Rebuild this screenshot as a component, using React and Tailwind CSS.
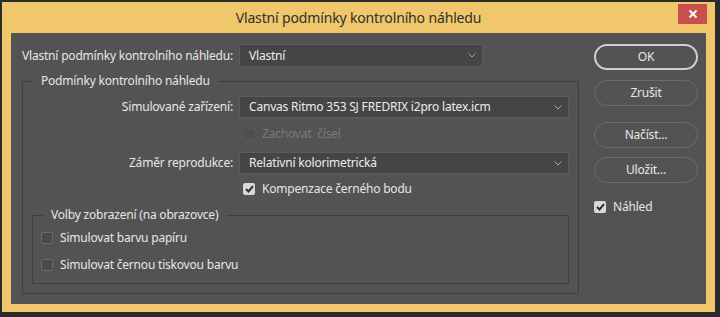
import React from 'react'

function Chevron() {
  return (
    <svg width="8" height="5" viewBox="0 0 8 5" className="shrink-0">
      <path d="M0.5 0.5 L4 4 L7.5 0.5" fill="none" stroke="#a8a8a8" strokeWidth="1" />
    </svg>
  )
}

function Select({ value, width }) {
  return (
    <div
      className={`flex items-center justify-between h-full ${width} bg-[#454545] border border-[#5c5c5c] rounded-[2px] pl-[9px] pr-[6px]`}
    >
      <span className="text-[#ececec] whitespace-nowrap">{value}</span>
      <Chevron />
    </div>
  )
}

function Check({ checked, disabled, label }) {
  return (
    <div className="flex items-center h-[16px] gap-[7px]">
      {checked ? (
        <span className="w-[12px] h-[12px] rounded-[2px] bg-[#d8d8d8] flex items-center justify-center">
          <svg width="9" height="8" viewBox="0 0 9 8">
            <path d="M1 4 L3.5 6.5 L8 1.2" fill="none" stroke="#2e2e2e" strokeWidth="2" />
          </svg>
        </span>
      ) : (
        <span
          className={`w-[12px] h-[12px] rounded-[2px] border ${
            disabled ? 'border-[#585858] bg-[#4e4e4e]' : 'border-[#6a6a6a] bg-[#4a4a4a]'
          }`}
        />
      )}
      <span className={`whitespace-pre ${disabled ? 'text-[#7a7a7a]' : 'text-[#e6e6e6]'}`}>{label}</span>
    </div>
  )
}

function Button({ children, primary, className = '' }) {
  return (
    <div
      className={`h-[26px] w-[104px] rounded-full flex items-center justify-center text-[#e8e8e8] ${
        primary ? 'border-2 border-[#cfcfcf]' : 'border border-[#6c6c6c]'
      } ${className}`}
    >
      {children}
    </div>
  )
}

export default function App() {
  return (
    <div
      className="w-[720px] h-[317px] bg-[#2b2b2b] pt-[2px] pl-[2px] overflow-hidden"
      style={{ fontFamily: '"Noto Sans", "Open Sans", sans-serif' }}
    >
      <div className="relative w-[713px] h-[310px] bg-[#f0c76b] flex flex-col px-[9px]">
        {/* title bar */}
        <div className="h-[31px] flex items-center justify-center text-[14px] tracking-[-0.15px] text-[#2f2f2f]">
          Vlastní podmínky kontrolního náhledu
        </div>
        <div className="absolute top-[2px] right-[8px] w-[29px] h-[20px] bg-[#c9504f] flex items-center justify-center">
          <svg width="10" height="10" viewBox="0 0 10 10">
            <path d="M1.5 1.5 L8.5 8.5 M8.5 1.5 L1.5 8.5" stroke="#ffffff" strokeWidth="1.8" />
          </svg>
        </div>

        {/* content */}
        <div className="h-[271px] bg-[#535353] flex text-[12px] leading-[16px] tracking-[-0.2px]">
          <div className="w-[583px] pl-[11px] pt-[11px]">
            <div className="flex items-center h-[23px]">
              <span className="w-[217px] whitespace-nowrap text-[#e6e6e6]">Vlastní podmínky kontrolního náhledu:</span>
              <Select value="Vlastní" width="w-[244px]" />
            </div>

            <fieldset className="mt-[6px] w-[557px] h-[221px] border border-[#3e3e3e] rounded-[1px]">
              <legend className="ml-[10px] px-[8px] text-[#e6e6e6]">Podmínky kontrolního náhledu</legend>

              <div className="flex items-center h-[22px] mt-[7px]">
                <span className="w-[216px] pr-[6px] text-right whitespace-nowrap text-[#e6e6e6]">Simulované zařízení:</span>
                <Select value="Canvas Ritmo 353 SJ FREDRIX i2pro latex.icm" width="w-[330px]" />
              </div>
              <div className="mt-[8px] pl-[220px]">
                <Check disabled label="Zachovat  čísel" />
              </div>
              <div className="flex items-center h-[22px] mt-[10px]">
                <span className="w-[216px] pr-[6px] text-right whitespace-nowrap text-[#e6e6e6]">Záměr reprodukce:</span>
                <Select value="Relativní kolorimetrická" width="w-[330px]" />
              </div>
              <div className="mt-[7px] pl-[220px]">
                <Check checked label="Kompenzace černého bodu" />
              </div>

              <fieldset className="mt-[10px] ml-[9px] w-[537px] h-[77px] border border-[#3e3e3e] rounded-[1px]">
                <legend className="ml-[10px] px-[8px] text-[#e6e6e6]">Volby zobrazení (na obrazovce)</legend>
                <div className="mt-[7px] pl-[8px]">
                  <Check label="Simulovat barvu papíru" />
                </div>
                <div className="mt-[11px] pl-[8px]">
                  <Check label="Simulovat černou tiskovou barvu" />
                </div>
              </fieldset>
            </fieldset>
          </div>

          <div className="w-[104px] pt-[11px] flex flex-col">
            <Button primary>OK</Button>
            <Button className="mt-[10px]">Zrušit</Button>
            <Button className="mt-[16px]">Načíst...</Button>
            <Button className="mt-[9px]">Uložit...</Button>
            <div className="mt-[16px]">
              <Check checked label="Náhled" />
            </div>
          </div>
        </div>
      </div>
    </div>
  )
}
